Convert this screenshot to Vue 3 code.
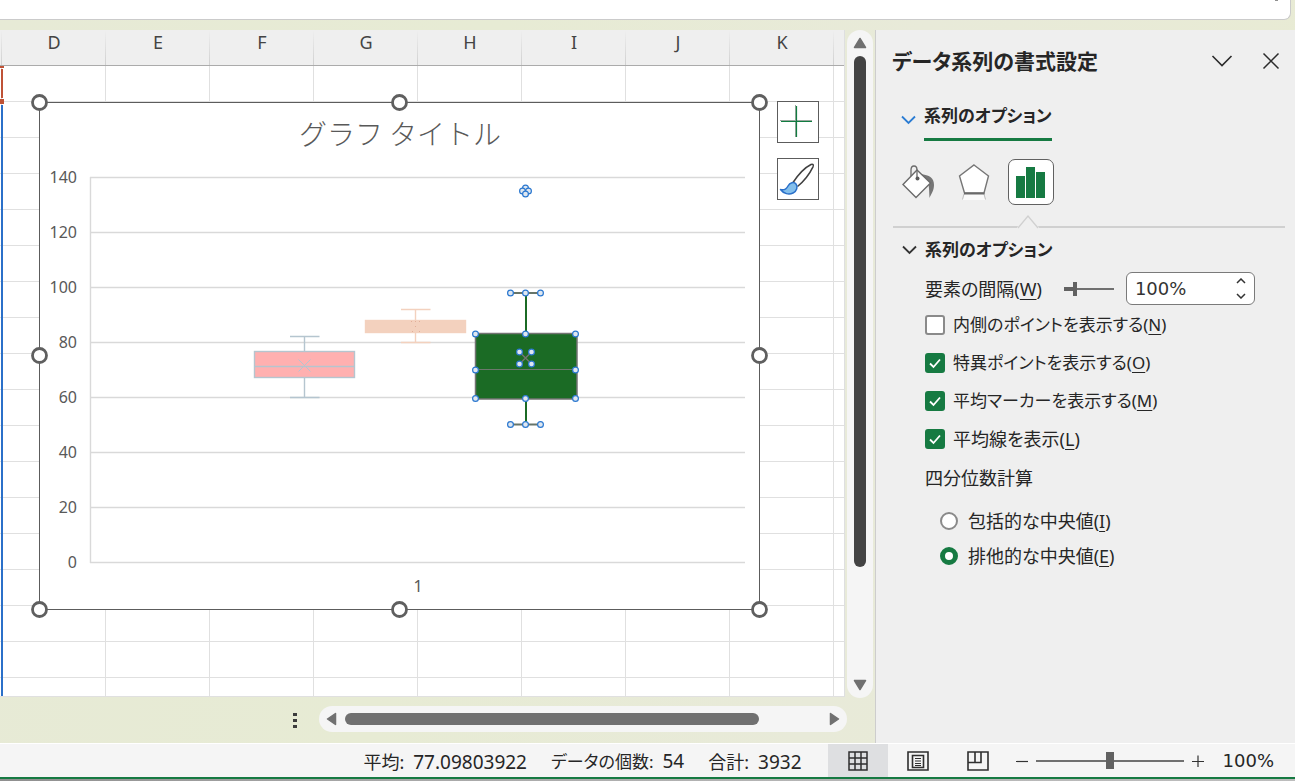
<script setup>
import { ref } from 'vue'

const columns = ['D', 'E', 'F', 'G', 'H', 'I', 'J', 'K']
const ticks = [140, 120, 100, 80, 60, 40, 20, 0]
const tickY = (v) => 562.5 - v * 2.75

const frameHandles = [
  [39.5, 102.5], [399.5, 102.5], [759.5, 102.5],
  [39.5, 355.5], [759.5, 355.5],
  [39.5, 609.5], [399.5, 609.5], [759.5, 609.5],
]
const pointHandles = [
  [510.5, 293], [525.5, 293], [540.5, 293],
  [475.5, 334], [525.5, 334], [575.5, 334],
  [475.5, 370], [575.5, 370],
  [475.5, 398.5], [525.5, 398.5], [575.5, 398.5],
  [510.5, 424.5], [525.5, 424.5], [540.5, 424.5],
  [519.5, 352], [531.5, 352], [519.5, 364], [531.5, 364],
  [525.5, 188], [522.5, 191], [528.5, 191], [525.5, 194],
]

const gap = ref(100)
const gapText = ref('100%')
const zoom = ref(100)
const checks = ref([
  { id: 'inner', text: '内側のポイントを表示する', key: 'N', on: false, compact: true },
  { id: 'outlier', text: '特異ポイントを表示する', key: 'O', on: true, compact: true },
  { id: 'marker', text: '平均マーカーを表示する', key: 'M', on: true, compact: true },
  { id: 'line', text: '平均線を表示', key: 'L', on: true, compact: false },
])
const quartile = ref('exc')
const quartiles = [
  { id: 'inc', text: '包括的な中央値', key: 'I' },
  { id: 'exc', text: '排他的な中央値', key: 'E' },
]
const stats = [
  { label: '平均:', value: '77.09803922', compact: false },
  { label: 'データの個数:', value: '54', compact: true },
  { label: '合計:', value: '3932', compact: false },
]
</script>

<template>
  <div class="app">
    <div class="formula"><span class="formula-mark"></span></div>

    <main class="main">
      <section class="book">
        <div class="book-top">
          <div class="sheet">
            <table class="cells">
              <colgroup>
                <col class="c-edge" />
                <col v-for="c in columns" :key="c" class="c-col" />
                <col />
              </colgroup>
              <thead>
                <tr>
                  <th></th>
                  <th v-for="c in columns" :key="c" scope="col">{{ c }}</th>
                  <th></th>
                </tr>
              </thead>
              <tbody>
                <tr v-for="r in 18" :key="r">
                  <td v-for="c in 10" :key="c"></td>
                </tr>
              </tbody>
            </table>
            <div class="range-red"></div>
            <div class="range-blue"></div>

            <svg class="chart" viewBox="30 94 740 524" role="img" aria-label="箱ひげ図">
              <rect x="39.5" y="102.5" width="720" height="507" fill="#fff" stroke="#5c5c5c" />
              <text class="chart-title" x="400" y="145" text-anchor="middle">グラフ タイトル</text>
              <g v-for="t in ticks" :key="t">
                <path :d="`M90 ${tickY(t)}H745`" stroke="#d9d9d9" stroke-width="1.4" />
                <text class="tick" x="77" :y="tickY(t) + 5.5" text-anchor="end">{{ t }}</text>
              </g>
              <path d="M90.5 177V563" stroke="#d9d9d9" stroke-width="1.4" />
              <text class="tick" x="418" y="592" text-anchor="middle">1</text>

              <g fill="none" stroke="#b5c5cf" stroke-width="1.4">
                <rect x="254.500" y="351.500" width="100" height="26" fill="#ffb0b0" />
                <path d="M254 366.500H355M304.500 336.500V351M304.500 378V397M290 336.500H319.500M290 397.500H319.500" />
                <path d="M298.500 359.500l12 12M310.500 359.500l-12 12" stroke-width="1" />
              </g>
              <g fill="none" stroke="#f3d1be" stroke-width="1.4">
                <rect x="365.500" y="320.500" width="100" height="12" fill="#f3d1be" />
                <path d="M415.500 309.500V320M415.500 333V342M401 309.500H430.500M401 342.500H430.500" />
                <path d="M411 321.500h1m3 0h1m3 0h1M412 331.500h1m6 0h1M415 326.500h1" stroke="#e2ae98" stroke-width="1" />
              </g>
              <g fill="none">
                <path d="M511 293H541M511 424.500H541" stroke="#66756a" stroke-width="2" />
                <path d="M526 293V334M526 399V424" stroke="#1b6b25" stroke-width="2" />
                <rect x="475.500" y="333.500" width="101.500" height="65.500" fill="#1b6b25" stroke="#737373" stroke-width="1.500" />
                <path d="M476 369.500H576" stroke="#6c786d" />
                <path d="M520 352.500l11 11M531 352.500l-11 11" stroke="#737373" stroke-width="1.400" />
              </g>
              <circle v-for="(p, i) in pointHandles" :key="'p' + i" :cx="p[0]" :cy="p[1]" r="2.9" fill="#dfe7f0" stroke="#2b78d0" stroke-width="1.200" />
              <circle v-for="(p, i) in frameHandles" :key="'f' + i" :cx="p[0]" :cy="p[1]" r="7" fill="#fff" stroke="#5f5f5f" stroke-width="2.800" />
            </svg>

            <div class="chart-tools">
              <button type="button" aria-label="グラフ要素">
                <svg width="40" height="40" viewBox="0 0 40 40"><path d="M2 18.500H34M17.500 3V35" stroke="#9aa79e" stroke-width="1" /><path d="M3 19.500H34M18.500 4V35" stroke="#107c41" stroke-width="1.200" /></svg>
              </button>
              <button type="button" aria-label="グラフ スタイル">
                <svg width="40" height="40" viewBox="0 0 40 40">
                  <path d="M15 23.500C20 16 27 8.500 33 5.500c2-.8 2.800.3 2 2.300C32 14 26 22 19.500 27.500" fill="#fff" stroke="#404040" stroke-width="1.500" />
                  <path d="M2.500 30.500c4 1.200 6-.5 7.500-3.500 1.800-3.500 6-4.500 8-2s1 7-3 9c-4 2-9.500.8-12.500-3.500z" fill="#83bfec" stroke="#2b70c9" stroke-width="1.500" stroke-linejoin="round" />
                </svg>
              </button>
            </div>
          </div>

          <div class="vscroll">
            <svg width="14" height="12" viewBox="0 0 14 12"><path d="M7 1.500L12.500 10.500H1.500z" fill="#707070" stroke="#707070" stroke-width="1.500" stroke-linejoin="round" /></svg>
            <div class="vtrack"><div class="vthumb"></div></div>
            <svg width="14" height="12" viewBox="0 0 14 12"><path d="M7 10.500L1.500 1.500H12.500z" fill="#707070" stroke="#707070" stroke-width="1.500" stroke-linejoin="round" /></svg>
          </div>
        </div>

        <div class="book-bottom">
          <svg class="dots" width="4" height="16" viewBox="0 0 4 16"><path d="M0 0h4v3H0zM0 6h4v3H0zM0 12h4v3H0z" fill="#3c3c3c" /></svg>
          <div class="hscroll">
            <svg width="11" height="14" viewBox="0 0 11 14"><path d="M1.500 7L9.500 1.500V12.500z" fill="#707070" stroke="#707070" stroke-width="1.500" stroke-linejoin="round" /></svg>
            <div class="htrack"><div class="hthumb"></div></div>
            <svg width="11" height="14" viewBox="0 0 11 14"><path d="M9.500 7L1.500 1.500V12.500z" fill="#707070" stroke="#707070" stroke-width="1.500" stroke-linejoin="round" /></svg>
          </div>
        </div>
      </section>

      <aside class="panel">
        <header class="panel-head">
          <h1>データ系列の書式設定</h1>
          <button type="button" aria-label="作業ウィンドウのオプション"><svg width="22" height="18" viewBox="0 0 22 18"><path d="M1.500 4L11 13.500L20.500 4" fill="none" stroke="#2b2b2b" stroke-width="1.600" /></svg></button>
          <button type="button" aria-label="閉じる"><svg width="18" height="18" viewBox="0 0 18 18"><path d="M1.500 1.500L16.500 16.500M16.500 1.500L1.500 16.500" fill="none" stroke="#2b2b2b" stroke-width="1.500" /></svg></button>
        </header>

        <button type="button" class="group">
          <svg width="15" height="10" viewBox="0 0 15 10"><path d="M1 1.500L7.500 8L14 1.500" fill="none" stroke="#2b7cd3" stroke-width="1.800" /></svg>
          <span>系列のオプション</span>
        </button>

        <div class="tabs">
          <button type="button" aria-label="塗りつぶしと線">
            <svg width="36" height="36" viewBox="0 0 36 36">
              <path d="M19 10C29 11 33 14 33 21C33 27 30 30 28.500 34C28 28 28.500 24 27 19z" fill="#767676" />
              <path d="M16 6L29.500 19L15 33.500L2 20.500z" fill="#fff" stroke="#6a6a6a" stroke-width="1.400" />
              <path d="M10 12V6Q10 2 13 2Q16 2 16 6V14" fill="none" stroke="#6a6a6a" stroke-width="1.300" />
              <circle cx="16.500" cy="14.500" r="2" fill="#5a5a5a" />
            </svg>
          </button>
          <button type="button" aria-label="効果">
            <svg width="36" height="40" viewBox="0 0 36 40">
              <path d="M7 32L5.500 38H28.500L27 32z" fill="#fafafa" />
              <path d="M7 32L5.500 37.500M27 32L28.500 37.500" stroke="#bdbdbd" />
              <path d="M17 3L31.500 14L27 31H7.500L2.500 14z" fill="#fff" stroke="#767676" stroke-width="1.400" />
              <path d="M7 31.500H27.500" stroke="#6a6a6a" stroke-width="2" />
            </svg>
          </button>
          <button type="button" class="active" aria-label="系列のオプション">
            <svg width="30" height="32" viewBox="0 0 30 32"><path d="M0 10H9V32H0zM10 1H19V32H10zM20 6H29V32H20z" fill="#167a42" /></svg>
          </button>
        </div>
        <div class="divider">
          <svg width="22" height="14" viewBox="0 0 22 14"><path d="M0 14V12.500L11 0.500L22 12.500V14z" fill="#efefef" /><path d="M1 13L11 1L21 13" fill="none" stroke="#d0d0d0" stroke-width="1.300" /></svg>
        </div>

        <h2 class="section">
          <svg width="15" height="10" viewBox="0 0 15 10"><path d="M1 1.500L7.500 8L14 1.500" fill="none" stroke="#333" stroke-width="1.800" /></svg>
          系列のオプション
        </h2>

        <div class="options">
          <div class="gap-row">
            <label for="gap">要素の間隔(<u>W</u>)</label>
            <input id="gap-range" v-model="gap" class="range gap-range" type="range" min="0" max="500" aria-label="要素の間隔" />
            <div class="spin">
              <input id="gap" v-model="gapText" type="text" />
              <div class="spin-btns">
                <button type="button" aria-label="増やす"><svg width="10" height="6" viewBox="0 0 10 6"><path d="M1 5L5 1L9 5" fill="none" stroke="#333" stroke-width="1.500" /></svg></button>
                <button type="button" aria-label="減らす"><svg width="10" height="6" viewBox="0 0 10 6"><path d="M1 1L5 5L9 1" fill="none" stroke="#333" stroke-width="1.500" /></svg></button>
              </div>
            </div>
          </div>
          <div v-for="c in checks" :key="c.id" class="check-row">
            <span class="box">
              <input :id="c.id" v-model="c.on" type="checkbox" />
              <svg v-if="c.on" width="20" height="20" viewBox="0 0 20 20"><path d="M5 10.500L8.500 14L15 6.500" fill="none" stroke="#fff" stroke-width="1.800" /></svg>
            </span>
            <label :for="c.id" :class="{ compact: c.compact }">{{ c.text }}(<u>{{ c.key }}</u>)</label>
          </div>
          <fieldset class="radios">
            <legend>四分位数計算</legend>
            <div v-for="q in quartiles" :key="q.id" class="radio-row">
              <input :id="q.id" v-model="quartile" type="radio" name="quartile" :value="q.id" />
              <label :for="q.id">{{ q.text }}(<u>{{ q.key }}</u>)</label>
            </div>
          </fieldset>
        </div>
      </aside>
    </main>

    <footer class="status">
      <div class="stats">
        <span v-for="s in stats" :key="s.label" class="stat">
          <span :class="{ compact: s.compact }">{{ s.label }}</span>
          <span class="value">{{ s.value }}</span>
        </span>
      </div>
      <div class="views">
        <button type="button" class="on" aria-label="標準">
          <svg width="20" height="20" viewBox="0 0 20 20"><path d="M1 1H19V19H1zM1 7H19M1 13H19M7 1V19M13 1V19" fill="none" stroke="#2f2f2f" stroke-width="1.500" /></svg>
        </button>
        <button type="button" aria-label="ページ レイアウト">
          <svg width="22" height="20" viewBox="0 0 22 20"><path d="M1 1H21V19H1zM5.500 4.500H16.500V16.500H5.500z" fill="none" stroke="#2f2f2f" stroke-width="1.600" /><path d="M8 7.500H14M8 10H14M8 12.500H14M8 14.500H14" stroke="#2f2f2f" stroke-width="1.100" /></svg>
        </button>
        <button type="button" aria-label="改ページ プレビュー">
          <svg width="22" height="20" viewBox="0 0 22 20"><path d="M1 1H21V19H1zM1 11.500H14V1M8 1V11.500" fill="none" stroke="#2f2f2f" stroke-width="1.600" /></svg>
        </button>
      </div>
      <div class="zoom">
        <button type="button" aria-label="縮小"><svg width="14" height="14" viewBox="0 0 14 14"><path d="M1 7.500H13" stroke="#333" stroke-width="1.200" /></svg></button>
        <input v-model="zoom" class="range wide" type="range" min="0" max="200" aria-label="ズーム" />
        <button type="button" aria-label="拡大"><svg width="14" height="14" viewBox="0 0 14 14"><path d="M1 7.500H13M7 1.500V13" stroke="#333" stroke-width="1.200" /></svg></button>
        <span class="pct">{{ zoom }}%</span>
      </div>
    </footer>
    <div class="behind"></div>
  </div>
</template>

<style>
body {
  margin: 0;
}
</style>

<style scoped>
.app {
  display: flex;
  flex-direction: column;
  box-sizing: border-box;
  min-height: 100vh;
  background: linear-gradient(100deg, #e7ead6, #e7ebd4 35%, #e8ead9 65%, #e8ebd3);
  color: #262626;
  font: 18px/24px "Noto Sans", "Noto Sans CJK JP", sans-serif;
  overflow: hidden;
}
button {
  display: flex;
  align-items: center;
  justify-content: center;
  padding: 0;
  border: 0;
  background: none;
  color: inherit;
  font: inherit;
}
svg {
  display: block;
  flex: none;
}
.compact {
  font-size: 17px;
}
.formula {
  height: 19px;
  margin: 0 4px 10px 0;
  background: #fff;
  border: 1px solid #cbcbcb;
  border-width: 0 1px 1px 0;
  border-radius: 0 0 7px 0;
  display: flex;
  justify-content: flex-end;
}
.formula-mark {
  width: 3px;
  height: 1px;
  margin-right: 12px;
  background: #909090;
}
.main {
  flex: 1;
  display: flex;
}
.book {
  flex: 1;
  min-width: 0;
  display: flex;
  flex-direction: column;
}
.book-top {
  flex: 1;
  display: flex;
  gap: 2px;
  padding-right: 2px;
}
.sheet {
  position: relative;
  flex: 1;
  min-width: 0;
  margin-bottom: 1px;
  background: #fff;
  border-right: 1px solid #dedfe0;
  overflow: hidden;
}
.cells {
  width: 100%;
  table-layout: fixed;
  border-collapse: separate;
  border-spacing: 0;
}
.c-edge {
  width: 2px;
}
.c-col {
  width: 104px;
}
th,
td {
  box-sizing: border-box;
  height: 36px;
  padding: 0;
  border-right: 1px solid #e0e0e0;
  border-bottom: 1px solid #e0e0e0;
}
th {
  padding-bottom: 11px;
  border-bottom-color: #ababab;
  border-right: 0;
  background: linear-gradient(#efefef, #d0d0d0) right / 1px 100% no-repeat #efefef;
  color: #444;
  font-weight: 400;
  line-height: 22px;
}
th:last-child {
  background: #efefef;
}
td:last-child {
  border-right: 0;
}
tr:last-child td {
  height: 19px;
}
.range-red,
.range-blue {
  position: absolute;
  left: 1px;
  width: 2px;
}
.range-red {
  top: 39px;
  height: 29px;
  background: #bf5236;
}
.range-red::before,
.range-red::after {
  content: "";
  position: absolute;
  left: -1px;
  width: 4px;
  background: #bf5236;
}
.range-red::before {
  top: -3px;
  height: 2px;
}
.range-red::after {
  top: 30px;
  height: 5px;
}
.range-blue {
  top: 75px;
  bottom: 1px;
  background: #2b70c9;
}
.chart {
  position: absolute;
  left: 30px;
  top: 64px;
  width: 740px;
  height: 524px;
}
.chart-title {
  fill: #595959;
  font: 300 28px "Noto Sans CJK JP", sans-serif;
}
.tick {
  fill: #595959;
  font: 16px "Noto Sans", sans-serif;
}
.chart-tools {
  position: absolute;
  left: 777px;
  top: 71px;
  display: grid;
  gap: 15px;
}
.chart-tools button {
  width: 42px;
  height: 42px;
  background: #fff;
  border: 1px solid #5c5c5c;
}
.vscroll {
  box-sizing: border-box;
  width: 26px;
  padding: 7px 0;
  border-radius: 13px;
  background: #f5f5f5;
  display: flex;
  flex-direction: column;
  align-items: center;
  gap: 7px;
}
.vtrack {
  flex: 1;
}
.vthumb {
  width: 12px;
  height: 83%;
  border-radius: 6px;
  background: #434343;
}
.book-bottom {
  display: flex;
  justify-content: flex-end;
  gap: 22px;
  padding: 8px 28px 11px 0;
}
.dots {
  margin-top: 7px;
}
.hscroll {
  box-sizing: border-box;
  width: 63%;
  max-width: 528px;
  height: 26px;
  padding: 0 7px;
  border-radius: 13px;
  background: #f5f5f5;
  display: flex;
  align-items: center;
  gap: 8px;
}
.htrack {
  flex: 1;
}
.hthumb {
  width: 87%;
  height: 12px;
  border-radius: 6px;
  background: #707070;
}
.panel {
  box-sizing: border-box;
  width: 420px;
  padding: 18px 10px 0 16px;
  background: #efefef;
  border-left: 1px solid #cdcdcd;
  font-feature-settings: "palt";
}
.panel-head {
  display: flex;
  align-items: center;
  padding-right: 5px;
}
.panel-head h1 {
  flex: 1;
  margin: 0;
  font-size: 21px;
  line-height: 26px;
  font-weight: 700;
}
.panel-head button + button {
  margin-left: 29px;
}
.group {
  gap: 8px;
  margin: 28px 0 0 9px;
  font-size: 17px;
  font-weight: 700;
}
.group span {
  height: 34px;
  padding-top: 2px;
  border-bottom: 3px solid #167a42;
}
.group svg {
  margin-top: -3px;
}
.tabs {
  display: flex;
  align-items: center;
  gap: 10px;
  margin: 18px 0 0 4px;
}
.tabs button {
  box-sizing: border-box;
  width: 46px;
  height: 46px;
}
.tabs .active {
  background: #fff;
  border: 1px solid #616161;
  border-radius: 7px;
}
.divider {
  margin: 10px 0 0 1px;
  height: 11px;
  padding-left: 124px;
  border-bottom: 2px solid #d0d0d0;
}
.section {
  display: flex;
  align-items: center;
  gap: 8px;
  margin: 10px 0 0 10px;
  font-size: 17px;
  line-height: 24px;
}
.options {
  padding: 10px 0 0 33px;
}
.gap-row {
  display: flex;
  align-items: center;
}
.range {
  appearance: none;
  width: 50px;
  height: 18px;
  margin: 0 12px 0 22px;
  background: linear-gradient(#707070, #707070) center / 100% 2px no-repeat;
}
.gap-range {
  background:
    linear-gradient(#616161, #616161) left / 10px 4px no-repeat,
    linear-gradient(#707070, #707070) center / 100% 2px no-repeat;
}
.range::-webkit-slider-thumb {
  appearance: none;
  width: 4px;
  height: 14px;
  background: #616161;
}
.range.wide {
  width: 148px;
  margin: 0 7px;
}
.range.wide::-webkit-slider-thumb {
  width: 8px;
  height: 17px;
}
.spin {
  box-sizing: border-box;
  display: flex;
  width: 129px;
  height: 33px;
  background: #fff;
  border: 1px solid #7a7a7a;
  border-radius: 6px;
}
.spin input {
  flex: 1;
  min-width: 0;
  padding: 0 0 0 8px;
  border: 0;
  background: none;
  outline: 0;
  color: #333;
  font: 18px "DejaVu Sans", sans-serif;
}
.spin-btns {
  display: grid;
  width: 26px;
  padding-bottom: 1px;
}
u {
  text-decoration-thickness: 1px;
  text-underline-offset: 3px;
}
.check-row {
  display: flex;
  align-items: center;
  gap: 8px;
  height: 38px;
}
.gap-row + .check-row {
  margin-top: 1px;
}
.box {
  position: relative;
  display: flex;
}
.box input {
  appearance: none;
  width: 20px;
  height: 20px;
  margin: 0;
  border: 2px solid #8a8a8a;
  border-radius: 3px;
  background: #fff;
}
.box input:checked {
  border-color: #167a42;
  background: #167a42;
}
.box svg {
  position: absolute;
  inset: 0;
  pointer-events: none;
}
.radios {
  margin: 0;
  padding: 0;
  border: 0;
}
.radios legend {
  padding: 8px 0 13px;
}
.radio-row {
  display: flex;
  align-items: center;
  gap: 10px;
  height: 35px;
  padding-left: 15px;
}
.radio-row input {
  appearance: none;
  width: 18px;
  height: 18px;
  margin: 0;
  border: 2px solid #8a8a8a;
  border-radius: 50%;
  background: #fff;
}
.radio-row input:checked {
  border: 5px solid #167a42;
}
.status {
  display: flex;
  height: 33px;
  border-top: 1px solid #fff;
  border-bottom: 2px solid #167a42;
  background: #f5f5f5;
}
.stats {
  flex: 1;
  display: flex;
  justify-content: flex-end;
  align-items: center;
  gap: 24px;
  padding: 2px 26px 0 0;
  font-feature-settings: "palt";
  white-space: nowrap;
}
.stat {
  display: flex;
  align-items: baseline;
  gap: 9px;
}
.value {
  font-size: 19px;
}
.views {
  display: flex;
}
.views button {
  width: 60px;
}
.views .on {
  background: #dedfe1;
}
.zoom {
  display: flex;
  align-items: center;
  padding: 0 21px 0 7px;
}
.pct {
  margin-left: 18px;
  font: 18px/24px "DejaVu Sans", sans-serif;
}
.behind {
  height: 2px;
  background: linear-gradient(90deg, #8f8f8f, #a5a5a5 25%, #b4b4b4 60%, #bdbdbd);
}
</style>
